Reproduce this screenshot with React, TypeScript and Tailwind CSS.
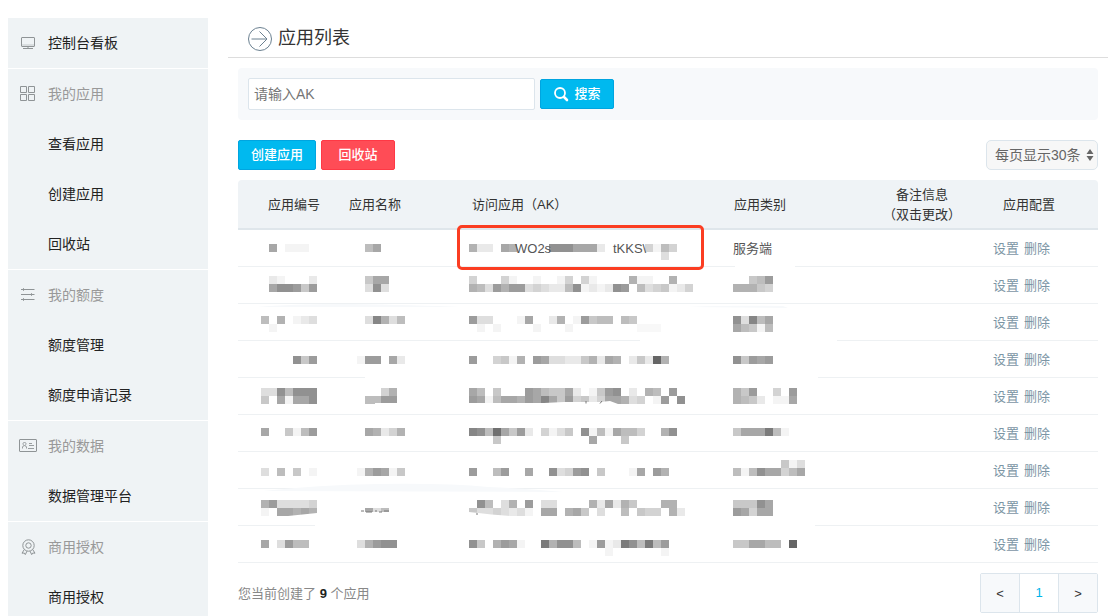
import { useState } from 'react'
import type { ReactNode } from 'react'

interface MenuGroup {
  title: string
  icon: ReactNode
  items: string[]
}

interface AppRow {
  top: number
  id: string[]
  name: string[]
  ak: string[]
  type: string[]
  typeLabel?: string
}

// Sidebar icons
const MonitorIcon = () => (
  <svg width="20" height="20" viewBox="0 0 20 20" fill="none" stroke="#8f9496" aria-hidden="true">
    <rect x="3.5" y="4.5" width="13" height="9" rx="0.5" />
    <path d="M4 12h12" stroke="#c3c8ca" />
    <path d="M10 14v1.5M5 15.5h10" />
  </svg>
)

const GridIcon = () => (
  <svg width="20" height="20" viewBox="0 0 20 20" fill="none" stroke="#8f9496" aria-hidden="true">
    <path d="M2.5 2.5h6v6h-6zM10.5 2.5h6v6h-6zM2.5 10.5h6v6h-6zM10.5 10.5h6v6h-6z" />
  </svg>
)

const LinesIcon = () => (
  <svg width="20" height="20" viewBox="0 0 20 20" fill="none" stroke="#8f9496" aria-hidden="true">
    <path d="M3 4.5h13.5M3 9.5h13.5M3 14.5h13.5" />
    <path d="M5.5 3v3M13.5 8v3M5.5 13v3" strokeWidth="0.8" />
  </svg>
)

const CardIcon = () => (
  <svg width="20" height="20" viewBox="0 0 20 20" fill="none" stroke="#8f9496" aria-hidden="true">
    <rect x="1.5" y="3.5" width="17" height="12" rx="0.5" />
    <path d="M4.5 12.5V11q0-1 1.8-1.3Q5 8.6 5 7.6Q5 6.5 6.5 6.5T8 7.6Q8 8.6 6.7 9.7Q8.5 10 8.5 11v1.5M11 7.5h3M11 9.5h5M10 12.5h6" strokeWidth="0.9" />
  </svg>
)

const MedalIcon = () => (
  <svg width="20" height="20" viewBox="0 0 20 20" fill="none" stroke="#8f9496" aria-hidden="true">
    <circle cx="10.5" cy="8.5" r="5.7" />
    <circle cx="10.5" cy="8.5" r="2.7" />
    <path d="M6.3 12.5l-2.3 3.7 2.3-.2 1 1.6 1.700-3.500M14.700 12.500l2.300 3.700-2.300-.2-1 1.600-1.700-3.500" />
  </svg>
)

const MENU: MenuGroup[] = [
  { title: '我的应用', icon: <GridIcon />, items: ['查看应用', '创建应用', '回收站'] },
  { title: '我的额度', icon: <LinesIcon />, items: ['额度管理', '额度申请记录'] },
  { title: '我的数据', icon: <CardIcon />, items: ['数据管理平台'] },
  { title: '商用授权', icon: <MedalIcon />, items: ['商用授权'] },
]

// Masked cells: one hex digit per 8px tile, a dot is blank and f is darkest
const ROWS: AppRow[] = [
  {
    top: 14,
    id: ['.8.111'],
    name: ['.68'],
    ak: ['722.87....aaa8882.....4164', '........................3'],
    type: [],
    typeLabel: '服务端',
  },
  {
    top: 9,
    id: ['.21...2', '.8aa959'],
    name: ['.588', '.3a3'],
    ak: ['4...41..1..14.41....711..7', '7639799343226a1212a9.6345124'],
    type: ['..569', '77754'],
  },
  {
    top: 12,
    id: ['6.7.123', '.1'],
    name: ['.3b736'],
    ak: ['933...18..27.19566.65', '.1.1....1...1'],
    type: ['a3b68', '86516'],
  },
  {
    top: 15,
    id: ['....a59'],
    name: ['199.82'],
    ak: ['9..4517.98332257287.252e7'],
    type: ['a5989'],
  },
  {
    top: 10,
    id: ['33a6aaa', '5.8188a'],
    name: ['...47', '.6699'],
    ak: ['86.5...9865582.159a.2.76.9', '981688798b859452488734.19.a'],
    type: ['759..4.9', '7652.118'],
  },
  {
    top: 13,
    id: ['8..5169'],
    name: ['.87247'],
    ak: ['ba6d8592.4135.a1618664..7a', '...5...........8...5'],
    type: ['5888c61'],
  },
  {
    top: 8,
    id: ['', '3.6.5.1'],
    name: ['', '179815'],
    ak: ['', '9..69..8..a349a.5...18.97'],
    type: ['......513', '616a88468'],
  },
  {
    top: 11,
    id: ['7933334', '1.88787'],
    name: ['', '.836'],
    ak: ['.a6.37.9.33....728275...77', '53343231.88.785.3..6.544.72'],
    type: ['555a8', '98488'],
  },
  {
    top: 14,
    id: ['8.3966'],
    name: ['379aa'],
    ak: ['a5.7981..c7aa6.1912ca6c69', '.................1......1'],
    type: ['558866.e'],
  },
]

function Mosaic({ top, tiles }: { top: number; tiles: string[] }) {
  const cols = Math.max(1, ...tiles.map((line) => line.length))
  return (
    <svg className="block" width={cols * 8} height="36" shapeRendering="crispEdges" aria-hidden="true">
      {tiles.map((line, y) =>
        line.split('').map((char, x) => {
          if (char === '.') return null
          const gray = 255 - parseInt(char, 16) * 11
          return (
            <rect key={`${x}-${y}`} x={x * 8} y={top + y * 8} width="8" height="8" fill={`rgb(${gray},${gray},${gray})`} />
          )
        })
      )}
    </svg>
  )
}

// Brush marks left over the table
function Smudges() {
  return (
    <svg className="absolute left-0 top-0 pointer-events-none" width="860" height="384" fill="#fff" aria-hidden="true">
      <path d="M497 86h60v1h-60zM402 160h197v1H402zM127 197h453v1H127zM82 308h180v1H82zM77 345h500v1H77z" />
      <path d="M20 127Q50 124 110 124Q180 125 222 127zM450 127Q480 125 545 126l5 2z" fill="#f7f9fb" />
      <path d="M25 311Q80 305 140 304Q210 303 250 307Q300 309 325 312z" fill="#f7f9fb" />
      <path d="M399 144h24v8h-24z" fill="#f8f8f8" />
      <path d="M50 336l29-3v4H50zM231 332q25 3 42 4h-42zM231 223h75l20-1h36l10-1 8 3H231zM137 223h32v2h-32z" />
      <path d="M125 332h28v5h-28z" />
      <path d="M123 331h3m2 1h6m3-1h2m2 1h3m2-1h5" stroke="#777" fill="none" />
      <path d="M348 221v2.500m14 0l2-2.500M239 333v2" stroke="#777" fill="none" />
    </svg>
  )
}

function Sidebar() {
  return (
    <nav className="w-50 flex-none text-sm">
      <a href="#dashboard" className="flex h-[50px] items-center gap-[10px] bg-[#eff3f5] pl-[10px] text-[#222]">
        <MonitorIcon />
        控制台看板
      </a>
      {MENU.map((group) => (
        <section key={group.title} className="mt-px bg-[#eff3f5]">
          <h2 className="flex h-[50px] items-center gap-[10px] pl-[10px] text-[#999]">
            {group.icon}
            {group.title}
          </h2>
          {group.items.map((item) => (
            <a key={item} href="#menu" className="flex h-[50px] items-center pl-10 text-[#222]">
              {item}
            </a>
          ))}
        </section>
      ))}
    </nav>
  )
}

function AppTable() {
  return (
    <div className="relative mt-[10px]">
      <table className="w-full table-fixed border-separate border-spacing-0 text-left text-[13px] leading-5 text-[#333]">
        <colgroup>
          <col className="w-[103px]" />
          <col className="w-[120px]" />
          <col className="w-[264px]" />
          <col className="w-[134px]" />
          <col />
          <col className="w-[113px]" />
        </colgroup>
        <thead>
          <tr className="h-[50px] bg-[#eff3f6] *:border-b-2 *:border-[#dfe6eb] *:px-0 *:pb-0 *:pt-0.5 *:font-normal">
            <th className="rounded-tl">
              <span className="pl-[30px]">应用编号</span>
            </th>
            <th>
              <span className="pl-2">应用名称</span>
            </th>
            <th>
              <span className="pl-[11px]">访问应用（AK）</span>
            </th>
            <th>
              <span className="pl-[9px]">应用类别</span>
            </th>
            <th className="text-center">
              备注信息
              <br />
              （双击更改）
            </th>
            <th className="rounded-tr">
              <span className="pl-[18px]">应用配置</span>
            </th>
          </tr>
        </thead>
        <tbody>
          {ROWS.map((row, i) => (
            <tr key={i} className="h-[37px] *:border-b *:border-[#eef1f3] *:pb-0 *:pr-0">
              <td className="pl-[23px] pt-0">
                <Mosaic top={row.top} tiles={row.id} />
              </td>
              <td className="pl-4 pt-0">
                <Mosaic top={row.top} tiles={row.name} />
              </td>
              <td className="relative pl-2 pt-0">
                <Mosaic top={row.top} tiles={row.ak} />
                {i === 0 && (
                  <>
                    <span className="absolute left-[54px] top-[9px] text-[#555]">WO2s</span>
                    <span className="absolute left-[152px] top-[9px] text-[#555]">tKKS\</span>
                    <span className="absolute -left-1 -top-[5px] z-10 h-[45px] w-[247px] rounded-[5px] border-3 border-[#fb3d22]" />
                  </>
                )}
              </td>
              <td className={row.typeLabel ? 'pl-2 pt-0.5 text-[#555]' : 'pl-2 pt-0'}>
                {row.typeLabel ?? <Mosaic top={row.top} tiles={row.type} />}
              </td>
              <td />
              <td className="pl-2 pt-0.5 text-[#7c95a5]">
                <div className="flex gap-[5px]">
                  <a href="#settings">设置</a>
                  <a href="#delete">删除</a>
                </div>
              </td>
            </tr>
          ))}
        </tbody>
      </table>
      <Smudges />
    </div>
  )
}

function App() {
  const [keyword, setKeyword] = useState('')
  const [pageSize, setPageSize] = useState('30')

  return (
    <div className="flex h-screen gap-5 overflow-hidden bg-white pl-2 pr-[6px] pt-[18px] font-['Liberation_Sans','Noto_Sans_CJK_SC',sans-serif]">
      <Sidebar />

      <main className="min-w-0 flex-1">
        {/* Title */}
        <header className="flex h-10 items-center gap-[6px] border-b border-[#ddd] pl-5">
          <svg width="24" height="24" viewBox="0 0 24 24" fill="none" stroke="#6b8090" className="mt-[3px]" aria-hidden="true">
            <circle cx="12" cy="12" r="11.5" />
            <path d="M3.5 12h15.5M11.5 4.5L19 12l-7.5 7.5" />
          </svg>
          <h1 className="text-lg text-[#333]">应用列表</h1>
        </header>

        <div className="px-[10px] pt-[10px]">
          {/* Search */}
          <form className="flex h-13 items-center gap-[5px] rounded bg-[#f7f9fb] px-[10px]" onSubmit={(e) => e.preventDefault()}>
            <input
              type="text"
              aria-label="请输入AK"
              placeholder="请输入AK"
              value={keyword}
              onChange={(e) => setKeyword(e.target.value)}
              className="h-8 w-[287px] rounded-xs border border-[#dce5ec] bg-white px-[5px] text-sm text-[#333] placeholder:text-[#757575]"
            />
            <button type="submit" className="flex h-[30px] w-[74px] items-center justify-center gap-[5px] rounded-xs border border-[#00a5e0] bg-[#00b9ef] text-[13px] font-medium text-white">
              <svg width="16" height="16" viewBox="0 0 16 16" fill="none" stroke="#fff" aria-hidden="true">
                <circle cx="7" cy="7" r="5" strokeWidth="1.8" />
                <path d="M11 11l3 3" strokeWidth="2.6" strokeLinecap="round" />
              </svg>
              搜索
            </button>
          </form>

          {/* Toolbar */}
          <div className="mt-5 flex gap-[5px] text-[13px] font-medium text-white">
            <button type="button" className="h-[30px] w-[78px] rounded-xs border border-[#00a5e0] bg-[#00b9ef]">
              创建应用
            </button>
            <button type="button" className="h-[30px] w-[74px] rounded-xs border border-[#ff3845] bg-[#ff4c56]">
              回收站
            </button>
            <div className="relative ml-auto">
              <select
                aria-label="每页显示"
                value={pageSize}
                onChange={(e) => setPageSize(e.target.value)}
                className="h-[30px] w-28 appearance-none rounded-[5px] border border-[#dce5ec] bg-[#f7f7f7] pl-2 text-sm font-normal text-[#666]"
              >
                <option value="10">每页显示10条</option>
                <option value="30">每页显示30条</option>
                <option value="50">每页显示50条</option>
              </select>
              <svg className="pointer-events-none absolute right-1 top-2" width="8" height="14" viewBox="0 0 8 14" fill="#666" aria-hidden="true">
                <path d="M4 1l3.5 5h-7zM4 13L.5 8h7z" />
              </svg>
            </div>
          </div>

          <AppTable />

          {/* Footer */}
          <footer className="mt-[10px] flex items-center justify-between text-[13px] text-[#888]">
            <p className="pt-0.5">
              您当前创建了 <b className="text-[#222]">9</b> 个应用
            </p>
            <div className="flex h-10 divide-x divide-[#dce5ec] rounded-xs border border-[#dce5ec] text-[#333]">
              <button type="button" aria-label="上一页" className="w-[39px] bg-[#f7f9fb] pt-0.5">
                &lt;
              </button>
              <button type="button" className="w-[39px] bg-white text-[#00b4ea]">
                1
              </button>
              <button type="button" aria-label="下一页" className="w-[38px] bg-[#f7f9fb] pt-0.5">
                &gt;
              </button>
            </div>
          </footer>
        </div>
      </main>
    </div>
  )
}

export default App
